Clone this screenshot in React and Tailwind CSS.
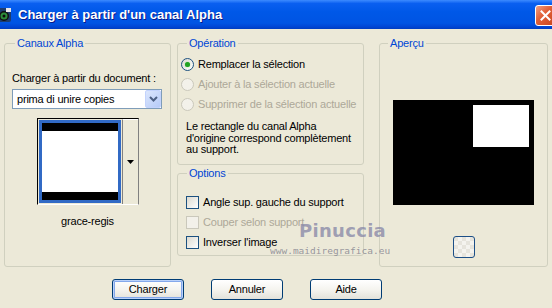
import React from 'react'

const FONT = { fontFamily: '"Liberation Sans", Arial, sans-serif' }

function Radio({ checked, disabled, children }) {
  return (
    <div className="flex items-center h-[13px] gap-[4px] whitespace-nowrap">
      <span
        className={`shrink-0 w-[13px] h-[13px] rounded-full border flex items-center justify-center ${
          disabled ? 'border-[#cac8bb] bg-[#f3f1ea]' : 'border-[#1c5180] bg-gradient-to-br from-[#dcdad0] to-[#ffffff]'
        }`}
      >
        {checked && <span className="w-[5px] h-[5px] rounded-full bg-[#21a121] shadow-[0_0_1px_#5fd55f]" />}
      </span>
      <span className={disabled ? 'text-[#aca899]' : 'text-black'}>{children}</span>
    </div>
  )
}

function Check({ disabled, children }) {
  return (
    <div className="flex items-center h-[13px] gap-[4px] whitespace-nowrap">
      <span
        className={`shrink-0 w-[13px] h-[13px] border ${
          disabled ? 'border-[#cac8bb] bg-[#f3f1ea]' : 'border-[#1c5180] bg-gradient-to-br from-[#dcdad0] to-[#ffffff]'
        }`}
      />
      <span className={disabled ? 'text-[#aca899]' : 'text-black'}>{children}</span>
    </div>
  )
}

function Btn({ children, def }) {
  return (
    <button
      className={`w-[72px] h-[21px] rounded-[3px] border border-[#003c74] bg-gradient-to-b from-[#ffffff] via-[#f5f4ef] to-[#e3e2da] text-[11px] text-black ${
        def ? 'shadow-[inset_0_0_0_1px_#b9d1fa,inset_0_0_0_2px_#84a8eb]' : ''
      }`}
    >
      {children}
    </button>
  )
}

export default function App() {
  return (
    <div className="w-[552px] h-[308px] bg-[#ece9d8] overflow-hidden relative text-[11px] leading-[13px] tracking-[-0.2px]" style={FONT}>
      {/* title bar */}
      <div className="h-[29px] flex items-center bg-[linear-gradient(#3d8bff_0%,#0a5ff0_12%,#0058e8_40%,#0054e3_80%,#0046d5_92%,#003dc0_100%)]">
        <svg width="14" height="16" viewBox="0 0 14 16" className="ml-[-2px]">
          <rect x="0" y="1" width="13" height="14" rx="2" fill="#1d3c6e" />
          <circle cx="6" cy="9" r="5" fill="#111" />
          <circle cx="6" cy="9" r="3.5" fill="#2c8c3a" />
          <circle cx="6" cy="9" r="1.5" fill="#0b0b0b" />
          <rect x="8" y="1" width="5" height="4" fill="#e8e8e8" />
        </svg>
        <span className="ml-[6px] text-white font-bold text-[13px] tracking-normal [text-shadow:1px_1px_#0a1b8a]">
          Charger à partir d'un canal Alpha
        </span>
        <div className="ml-auto mr-[-4px] w-[21px] h-[21px] rounded-[3px] border border-white bg-[linear-gradient(135deg,#f0a085_0%,#e2623a_40%,#c8431b_100%)] flex items-center justify-center mt-[1px]">
          <svg width="11" height="11" viewBox="0 0 11 11">
            <path d="M1.5 1.5 L9.5 9.5 M9.5 1.5 L1.5 9.5" stroke="#fff" strokeWidth="2" strokeLinecap="square" />
          </svg>
        </div>
      </div>

      {/* body */}
      <div className="flex pt-[8px] pl-[4px]">
        {/* Canaux Alpha */}
        <fieldset className="w-[167px] h-[230px] border border-[#d0d0bf] rounded-[3px] px-[7px]">
          <legend className="px-[2px] ml-[3px] text-[#0046d5]">Canaux Alpha</legend>
          <div className="pt-[22px]">Charger à partir du document :</div>
          <div className="mt-[4px] h-[20px] w-[150px] border border-[#7f9db9] bg-white flex items-center">
            <span className="pl-[4px] flex-1">prima di unire copies</span>
            <span className="w-[16px] h-[18px] rounded-[2px] bg-[linear-gradient(135deg,#dbe6fd,#b6cbf8)] border border-[#c3d3fd] flex items-center justify-center">
              <svg width="9" height="6" viewBox="0 0 9 6">
                <path d="M1 1 L4.5 4.5 L8 1" stroke="#4d6185" strokeWidth="2" fill="none" />
              </svg>
            </span>
          </div>
          <div className="mt-[9px] mx-auto w-[102px] h-[87px] flex border-t border-l border-black border-b border-b-white border-r border-r-[#808080]">
            <div className="m-[1px] w-[82px] border-[3px] border-[#316ac5] bg-white flex flex-col justify-between">
              <div className="h-[8px] bg-black" />
              <div className="h-[8px] bg-black" />
            </div>
            <div className="flex-1 border-l border-[#808080] border-t border-t-white bg-[#ece9d8] flex items-center justify-center">
              <svg width="7" height="4" viewBox="0 0 7 4">
                <path d="M0 0 H7 L3.5 4 Z" fill="#000" />
              </svg>
            </div>
          </div>
          <div className="mt-[10px] text-center">grace-regis</div>
        </fieldset>

        {/* middle column */}
        <div className="ml-[6px] w-[187px] flex flex-col">
          <fieldset className="h-[128px] border border-[#d0d0bf] rounded-[3px] pl-[3px]">
            <legend className="px-[2px] ml-[6px] text-[#0046d5]">Opération</legend>
            <div className="pt-[8px] flex flex-col gap-[7px]">
              <Radio checked>Remplacer la sélection</Radio>
              <Radio disabled>Ajouter à la sélection actuelle</Radio>
              <Radio disabled>Supprimer de la sélection actuelle</Radio>
            </div>
            <p className="mt-[10px] pl-[5px] leading-[11.5px]">
              Le rectangle du canal Alpha
              <br />
              d'origine correspond complètement
              <br />
              au support.
            </p>
          </fieldset>
          <fieldset className="mt-[2px] h-[89px] border border-[#d0d0bf] rounded-[3px] pl-[8px]">
            <legend className="px-[2px] ml-[1px] text-[#0046d5]">Options</legend>
            <div className="pt-[16px] flex flex-col gap-[7px]">
              <Check>Angle sup. gauche du support</Check>
              <Check disabled>Couper selon support</Check>
              <Check>Inverser l'image</Check>
            </div>
          </fieldset>
        </div>

        {/* Aperçu */}
        <fieldset className="ml-[15px] w-[168px] h-[230px] border border-[#d0d0bf] rounded-[3px] px-[13px]">
          <legend className="px-[2px] ml-[-5px] text-[#0046d5]">Aperçu</legend>
          <div className="mt-[50px] w-[141px] h-[105px] bg-black flex justify-end items-start">
            <div className="mt-[5px] mr-[5px] w-[56px] h-[42px] bg-white" />
          </div>
          <div className="mt-[31px] mx-auto w-[22px] h-[22px] rounded-[3px] border border-[#1c4f87] bg-[conic-gradient(#f4f3ee_25%,#e6e4dc_0_50%,#f4f3ee_0_75%,#e6e4dc_0)] bg-[length:8px_8px]" />
        </fieldset>
      </div>

      {/* buttons */}
      <div className="flex gap-[27px] pl-[112px] mt-[12px]">
        <Btn def>Charger</Btn>
        <Btn>Annuler</Btn>
        <Btn>Aide</Btn>
      </div>

      {/* watermark */}
      <div className="absolute left-[299px] top-[221px] text-[18px] font-semibold leading-[20px] text-[#8a8aa8]/80 tracking-[0.3px]" style={{ fontFamily: '"DejaVu Sans", sans-serif' }}>
        Pinuccia
      </div>
      <div className="absolute left-[270px] top-[245px] text-[9.5px] leading-[11px] text-[#8c8c96]/90 tracking-normal" style={{ fontFamily: '"DejaVu Sans Mono", monospace' }}>
        www.maidiregrafica.eu
      </div>
    </div>
  )
}
